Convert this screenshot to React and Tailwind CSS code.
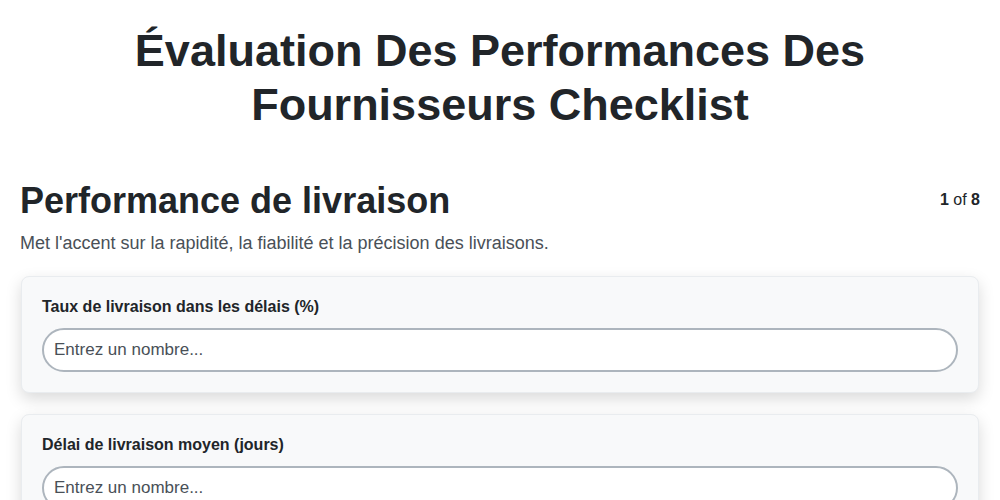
const questions = [
  { id: 'q1', label: 'Taux de livraison dans les délais (%)' },
  { id: 'q2', label: 'Délai de livraison moyen (jours)' },
  { id: 'q3', label: 'Taux de commandes complètes (%)' },
];

export default function App() {
  return (
    <div className="min-h-screen bg-white font-['Liberation_Sans',Arial,sans-serif] text-[#212529]">
      <div className="px-5 pt-6 pb-10">
        <h1 className="mx-auto max-w-[800px] text-center text-[45px] font-bold leading-[54px]">
          Évaluation Des Performances Des Fournisseurs Checklist
        </h1>

        <div className="mt-[47px] flex items-start justify-between">
          <h2 className="text-[36px] font-bold leading-[44px]">Performance de livraison</h2>
          <div className="pt-[9px] text-[16px]">
            <span className="font-bold">1</span> of <span className="font-bold">8</span>
          </div>
        </div>
        <p className="mt-[8px] text-[18px] leading-[24px] text-[#495057]">
          Met l'accent sur la rapidité, la fiabilité et la précision des livraisons.
        </p>

        <div className="mt-[21px] flex flex-col gap-[21px]">
          {questions.map((q) => (
            <div
              key={q.id}
              className="mx-px rounded-lg border border-[#e9ecef] bg-[#f8f9fa] px-5 pt-[19px] pb-5 shadow-[0_6px_16px_rgba(0,0,0,0.15)]"
            >
              <label htmlFor={q.id} className="block text-[16px] font-bold leading-[22px]">
                {q.label}
              </label>
              <input
                id={q.id}
                type="text"
                placeholder="Entrez un nombre..."
                className="mt-[10px] h-[44px] w-full rounded-full border-2 border-[#adb5bd] bg-white px-[10px] text-[17px] placeholder:text-[#495057] focus:outline-none"
              />
            </div>
          ))}
        </div>
      </div>
    </div>
  );
}
